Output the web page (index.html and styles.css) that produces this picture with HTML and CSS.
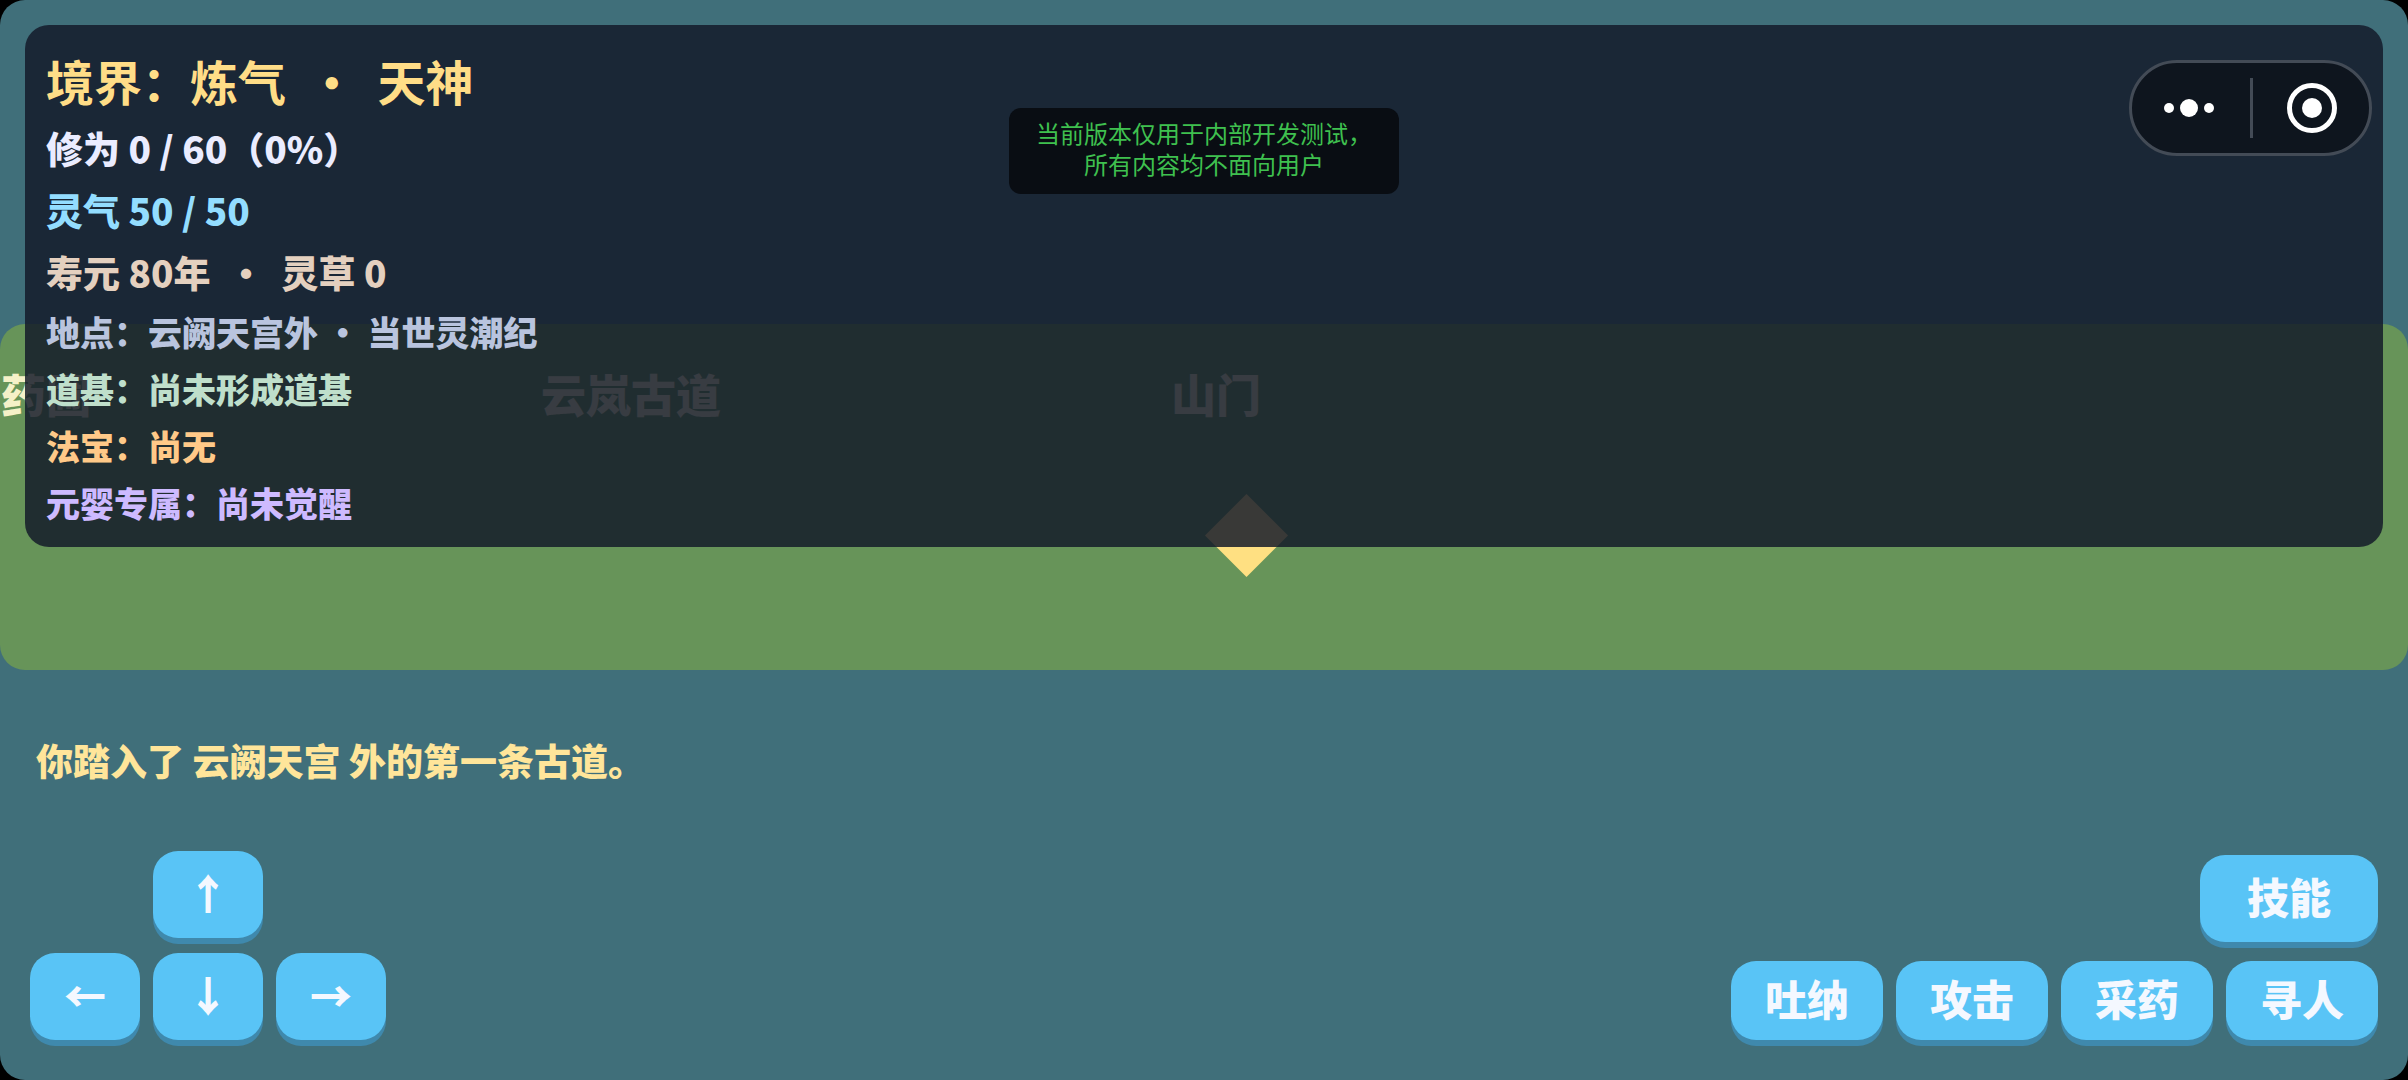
FILE: index.html
```html
<!DOCTYPE html>
<html lang="zh-CN">
<head>
  <meta charset="UTF-8" />
  <meta name="viewport" content="width=device-width, initial-scale=1.0"/>
  <title>云阙天宫</title>
  <link rel="stylesheet" href="styles.css">
</head>
<body>
  <main class="game">
    <section class="map">
      <span class="place place-garden">药圃</span>
      <span class="place place-road">云岚古道</span>
      <span class="place place-gate">山门</span>
      <svg class="player" viewBox="0 0 84 84"><path d="M42 0L84 42L42 84L0 42Z" fill="#ffe082"/></svg>
    </section>

    <section class="hud">
      <h1 class="realm">境界：炼气  ·  天神</h1>
      <p class="stat exp">修为 0 / 60（0%）</p>
      <p class="stat mana">灵气 50 / 50</p>
      <p class="stat life">寿元 80年  ·  灵草 0</p>
      <p class="note location">地点：云阙天宫外 · 当世灵潮纪</p>
      <p class="note base">道基：尚未形成道基</p>
      <p class="note treasure">法宝：尚无</p>
      <p class="note soul">元婴专属：尚未觉醒</p>
    </section>

    <p class="message">你踏入了 云阙天宫 外的第一条古道。</p>

    <div class="controls">
      <div class="pad">
        <button class="btn up" aria-label="上">↑</button>
        <button class="btn left" aria-label="左">←</button>
        <button class="btn down" aria-label="下">↓</button>
        <button class="btn right" aria-label="右">→</button>
      </div>
      <div class="actions">
        <button class="btn skill">技能</button>
        <div class="action-row">
          <button class="btn action">吐纳</button>
          <button class="btn action">攻击</button>
          <button class="btn action">采药</button>
          <button class="btn action">寻人</button>
        </div>
      </div>
    </div>

    <div class="notice">当前版本仅用于内部开发测试，<br>所有内容均不面向用户</div>

    <div class="capsule">
      <button class="capsule-btn more" aria-label="更多">
        <svg width="52" height="20" viewBox="0 0 52 20" fill="#fff">
          <circle cx="6" cy="10" r="5"/>
          <circle cx="26" cy="10" r="9"/>
          <circle cx="46" cy="10" r="5"/>
        </svg>
      </button>
      <button class="capsule-btn close" aria-label="关闭">
        <svg width="50" height="50" viewBox="0 0 50 50">
          <circle cx="25" cy="25" r="22.5" fill="none" stroke="#fff" stroke-width="5"/>
          <circle cx="25" cy="25" r="10" fill="#fff"/>
        </svg>
      </button>
    </div>
  </main>
</body>
</html>
```
FILE: styles.css
```css
* {
  box-sizing: border-box;
}

body {
  margin: 0;
  background: #000;
  font-family: "Noto Sans CJK SC", sans-serif;
  font-weight: 900;
}

h1, p {
  margin: 0;
}

button {
  font-family: inherit;
  font-weight: inherit;
  border: none;
  padding: 0;
  cursor: pointer;
}

.game {
  position: relative;
  display: flex;
  flex-direction: column;
  min-height: 100vh;
  padding-top: 30vh;
  padding-bottom: 40px;
  background: #406f7a;
  border-radius: 25px;
  overflow: hidden;
}

/* map */
.map {
  position: relative;
  height: 32vh;
  background: #679459;
  border-radius: 25px;
}

.place {
  position: absolute;
  top: 38px;
  transform: translateX(-50%);
  font-size: 45px;
  line-height: 64px;
  white-space: nowrap;
  color: #f5f1c8;
}

.place-garden {
  left: 46px;
}

.place-road {
  left: 631px;
}

.place-gate {
  left: 1216px;
}

.player {
  position: absolute;
  left: 1205px;
  top: 170px;
  width: 83px;
  height: 83px;
}

/* status panel */
.hud {
  position: absolute;
  top: 25px;
  left: 25px;
  right: 25px;
  display: flex;
  flex-direction: column;
  gap: 11px;
  padding: 23px 21px 21px;
  background: rgba(19, 25, 41, 0.84);
  border-radius: 24px;
  white-space: pre;
}

.realm {
  font-size: 48px;
  line-height: 64px;
  color: #ffdd87;
}

.stat {
  font-size: 37px;
  line-height: 51px;
}

.note {
  font-size: 34px;
  line-height: 46px;
}

.exp {
  color: #eaecff;
}

.mana {
  color: #93ddff;
}

.life {
  color: #e4d0bf;
}

.location {
  color: #b9c4de;
}

.base {
  color: #bfdfcb;
}

.treasure {
  color: #ffc988;
}

.soul {
  color: #cdbaff;
}

.message {
  margin: 64px 36px 0;
  font-size: 37px;
  line-height: 52px;
  color: #ffe59a;
}

/* controls */
.controls {
  display: flex;
  justify-content: space-between;
  align-items: flex-end;
  margin-top: auto;
  padding: 0 30px;
}

.btn {
  height: 87px;
  padding-bottom: 6px;
  background: #59c4f6;
  border-radius: 25px;
  box-shadow: 0 6px 0 #3f89ad;
  color: #f4f8ff;
  font-size: 42px;
  line-height: 60px;
}

.pad {
  display: grid;
  grid-template-columns: repeat(3, 110px);
  gap: 15px 13px;
}

.up {
  grid-column: 2;
}

.left {
  grid-column: 1;
}

.actions {
  display: flex;
  flex-direction: column;
  align-items: flex-end;
  gap: 19px;
}

.action-row {
  display: flex;
  gap: 13px;
}

.skill {
  width: 178px;
}

.action {
  width: 152px;
  height: 79px;
}

/* overlays */
.notice {
  position: absolute;
  top: 108px;
  left: 50%;
  transform: translateX(-50%);
  width: 390px;
  padding: 9px 0 15px;
  background: #090d13;
  border-radius: 12px;
  color: #3fc04f;
  font-size: 24px;
  font-weight: 400;
  line-height: 31px;
  text-align: center;
  white-space: nowrap;
}

.capsule {
  position: absolute;
  top: 60px;
  right: 36px;
  display: flex;
  align-items: center;
  width: 243px;
  height: 96px;
  background: #0e151e;
  border: 3px solid #434b56;
  border-radius: 48px;
}

.capsule-btn {
  flex: 1;
  display: flex;
  align-items: center;
  justify-content: center;
  height: 60px;
  background: none;
}

.more {
  padding-right: 4px;
}

.close {
  border-left: 3px solid #434b56;
  padding-left: 2px;
}
```
